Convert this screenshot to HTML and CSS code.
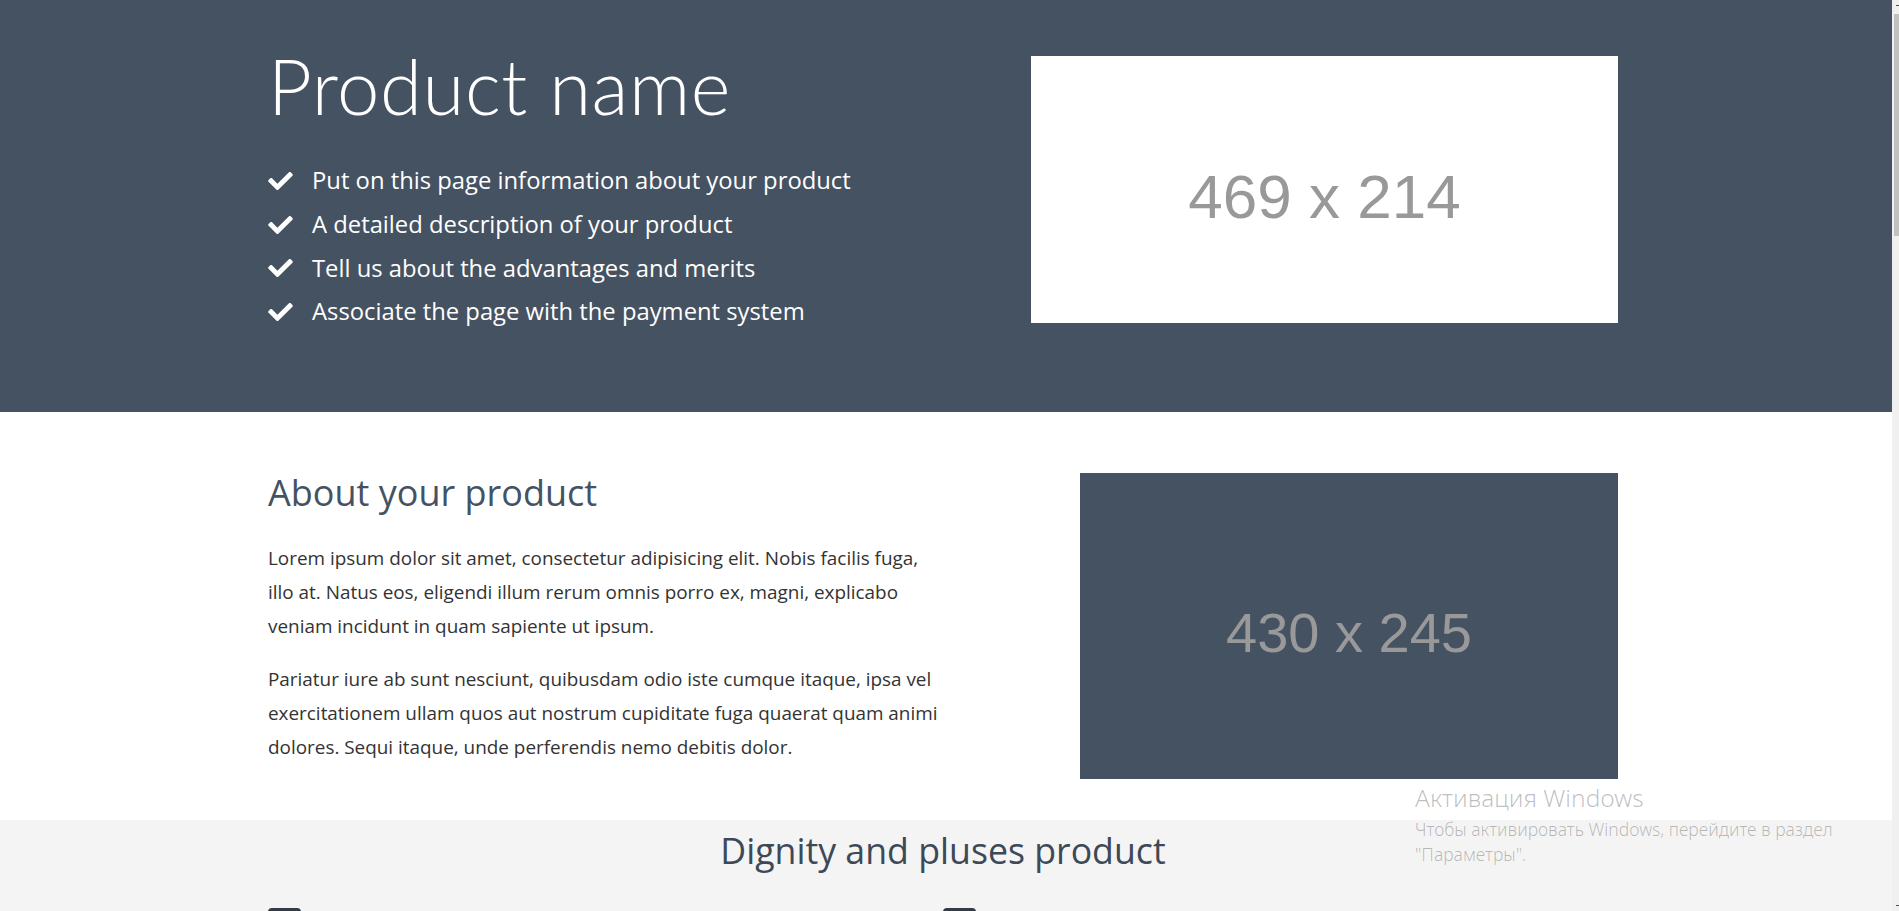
FILE: index.html
```html
<!DOCTYPE html>
<html lang="en">
<head>
<meta charset="utf-8">
<title>Product name</title>
<link rel="stylesheet" href="styles.css">
</head>
<body>
<div class="window">
  <div class="page">
    <header class="hero">
      <div class="container hero-inner">
        <div class="hero-text">
          <h1 class="hero-title">Product name</h1>
          <ul class="checklist">
            <li><svg class="check" viewBox="0 69 512 374"><path d="M173.898 439.404l-166.4-166.4c-9.997-9.997-9.997-26.206 0-36.204l36.203-36.204c9.997-9.998 26.207-9.998 36.204 0L192 312.69 432.095 72.596c9.997-9.997 26.207-9.997 36.204 0l36.203 36.204c9.997 9.997 9.997 26.206 0 36.204l-294.4 294.401c-9.998 9.997-26.207 9.997-36.204-.001z"/></svg><span>Put on this page information about your product</span></li>
            <li><svg class="check" viewBox="0 69 512 374"><path d="M173.898 439.404l-166.4-166.4c-9.997-9.997-9.997-26.206 0-36.204l36.203-36.204c9.997-9.998 26.207-9.998 36.204 0L192 312.69 432.095 72.596c9.997-9.997 26.207-9.997 36.204 0l36.203 36.204c9.997 9.997 9.997 26.206 0 36.204l-294.4 294.401c-9.998 9.997-26.207 9.997-36.204-.001z"/></svg><span>A detailed description of your product</span></li>
            <li><svg class="check" viewBox="0 69 512 374"><path d="M173.898 439.404l-166.4-166.4c-9.997-9.997-9.997-26.206 0-36.204l36.203-36.204c9.997-9.998 26.207-9.998 36.204 0L192 312.69 432.095 72.596c9.997-9.997 26.207-9.997 36.204 0l36.203 36.204c9.997 9.997 9.997 26.206 0 36.204l-294.4 294.401c-9.998 9.997-26.207 9.997-36.204-.001z"/></svg><span>Tell us about the advantages and merits</span></li>
            <li><svg class="check" viewBox="0 69 512 374"><path d="M173.898 439.404l-166.4-166.4c-9.997-9.997-9.997-26.206 0-36.204l36.203-36.204c9.997-9.998 26.207-9.998 36.204 0L192 312.69 432.095 72.596c9.997-9.997 26.207-9.997 36.204 0l36.203 36.204c9.997 9.997 9.997 26.206 0 36.204l-294.4 294.401c-9.998 9.997-26.207 9.997-36.204-.001z"/></svg><span>Associate the page with the payment system</span></li>
          </ul>
        </div>
        <div class="ph ph-light hero-img">469 x 214</div>
      </div>
    </header>

    <section class="about">
      <div class="container about-inner">
        <div class="about-text">
          <h2 class="about-title">About your product</h2>
          <p>Lorem ipsum dolor sit amet, consectetur adipisicing elit. Nobis facilis fuga,<br>illo at. Natus eos, eligendi illum rerum omnis porro ex, magni, explicabo<br>veniam incidunt in quam sapiente ut ipsum.</p>
          <p>Pariatur iure ab sunt nesciunt, quibusdam odio iste cumque itaque, ipsa vel<br>exercitationem ullam quos aut nostrum cupiditate fuga quaerat quam animi<br>dolores. Sequi itaque, unde perferendis nemo debitis dolor.</p>
        </div>
        <div class="ph ph-dark about-img">430 x 245</div>
      </div>
    </section>

    <section class="features">
      <div class="container">
        <h2 class="features-title">Dignity and pluses product</h2>
        <div class="features-grid">
          <div class="feature"><div class="feature-icon"></div></div>
          <div class="feature"><div class="feature-icon"></div></div>
        </div>
      </div>
    </section>
  </div>

  <div class="scrollbar">
    <div class="sb-btn sb-up"></div>
    <div class="sb-track"><div class="sb-thumb"></div></div>
    <div class="sb-btn sb-down"></div>
  </div>

  <div class="watermark">
    <div class="wm-title">Активация Windows</div>
    <div class="wm-text">Чтобы активировать Windows, перейдите в раздел<br>"Параметры".</div>
  </div>
</div>
</body>
</html>
```

FILE: styles.css
```css
* { box-sizing: border-box; }

html, body {
  margin: 0;
  padding: 0;
  height: 100%;
}

body {
  font-family: "Open Sans", "Noto Sans", "DejaVu Sans", sans-serif;
  color: #333;
  background: #fff;
}

.window {
  position: relative;
  display: flex;
  height: 911px;
  overflow: hidden;
}

.page {
  flex: 1;
  min-width: 0;
  overflow: hidden;
}

.container {
  width: 1350px;
  margin-left: calc(50% - 678px);
}

/* ---------- hero ---------- */
.hero {
  background: #455262;
  color: #fff;
  height: 412px;
  padding-top: 40px;
}

.hero-inner {
  display: flex;
  justify-content: space-between;
  align-items: flex-start;
}

.hero-title {
  margin: 0;
  font-family: Lato, "Open Sans", sans-serif;
  font-size: 76px;
  font-weight: 300;
  line-height: 1.2;
  letter-spacing: 0.6px;
}

.checklist {
  list-style: none;
  margin: 28px 0 0;
  padding: 0;
}

.checklist li {
  display: flex;
  align-items: center;
  gap: 19px;
  font-size: 23.8px;
  line-height: 43.7px;
}

.check {
  width: 25px;
  height: 18px;
  fill: #fff;
  flex: none;
}

/* ---------- placeholders ---------- */
.ph {
  display: flex;
  align-items: center;
  justify-content: center;
  font-family: "Liberation Sans", Arial, sans-serif;
  color: #999;
  padding-top: 13px;
  flex: none;
}

.ph-light { background: #fff; }
.ph-dark { background: #455262; }

.hero-img {
  width: 587px;
  height: 267px;
  margin-top: 16px;
  font-size: 62px;
}

.about-img {
  width: 538px;
  height: 306px;
  margin-top: 2px;
  font-size: 56px;
}

/* ---------- about ---------- */
.about {
  background: #fff;
  height: 408px;
  padding-top: 59px;
}

.about-inner {
  display: flex;
  justify-content: space-between;
  align-items: flex-start;
}

.about-text {
  width: 720px;
}

.about-title {
  margin: 0 0 27px;
  font-size: 36px;
  font-weight: 400;
  line-height: 1.2;
  color: #455262;
}

.about-text p {
  margin: 0 0 19px;
  font-size: 18.9px;
  line-height: 34px;
  color: #333;
}

/* ---------- features ---------- */
.features {
  background: #f4f4f4;
  padding: 9px 0 60px;
}

.features-title {
  margin: 0;
  text-align: center;
  font-size: 35.7px;
  font-weight: 400;
  line-height: 1.2;
  color: #3d4957;
}

.features-grid {
  display: grid;
  grid-template-columns: 1fr 1fr;
  margin-top: 36px;
}

.feature {
  display: flex;
}

.feature-icon {
  width: 33px;
  height: 33px;
  border-radius: 4px;
  background: #343b45;
  flex: none;
}

/* ---------- scrollbar ---------- */
.scrollbar {
  width: 7px;
  flex: none;
  background: #f0f0f0;
  display: flex;
  flex-direction: column;
}

.sb-btn {
  height: 14px;
  display: flex;
  justify-content: flex-end;
}

.sb-up { align-items: flex-start; padding-top: 5px; }
.sb-down { align-items: flex-end; padding-bottom: 5px; }

.sb-btn::after {
  content: "";
  width: 3px;
  height: 1px;
  background: #505050;
}

.sb-track {
  flex: 1;
  padding-left: 2px;
}

.sb-thumb {
  height: 222px;
  background: #c1c1c1;
}

/* ---------- windows activation watermark ---------- */
.watermark {
  position: absolute;
  left: 1415px;
  top: 782px;
  color: rgba(0, 0, 0, 0.26);
  font-family: "Noto Sans", "DejaVu Sans", sans-serif;
  font-weight: 300;
  pointer-events: none;
}

.wm-title {
  font-size: 24.5px;
  line-height: 32px;
}

.wm-text {
  font-size: 17.5px;
  line-height: 25px;
  margin-top: 3px;
}
```
